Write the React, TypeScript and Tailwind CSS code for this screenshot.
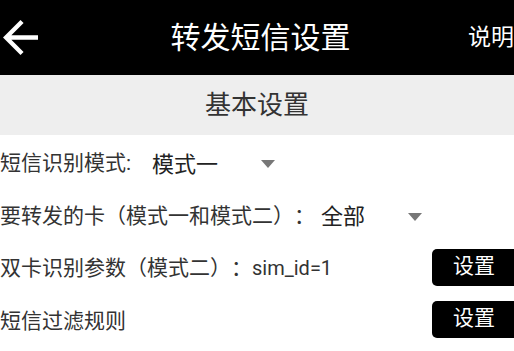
import React from "react";

const cjk = { fontFamily: "Roboto, 'Noto Sans CJK SC', sans-serif" };

function Caret() {
  return (
    <svg width="14" height="8" viewBox="0 0 14 8" className="shrink-0">
      <path d="M0 0H14L7 8Z" fill="#777777" />
    </svg>
  );
}

function SetButton() {
  return (
    <button className="ml-auto flex h-[37px] w-[82px] items-center justify-center rounded-l-[5px] bg-black pl-[2px] text-[21px] text-white">
      设置
    </button>
  );
}

export default function App() {
  return (
    <div
      className="h-[351px] w-[514px] overflow-hidden bg-white [text-spacing-trim:space-all]"
      style={cjk}
    >
      <div className="grid h-[75px] grid-cols-[53px_1fr_46px] items-center bg-black text-white">
        <div className="flex items-center pl-[3px]">
          <svg width="35" height="35" viewBox="4 4 16 16">
            <path
              d="M20 11H7.83l5.59-5.59L12 4l-8 8 8 8 1.41-1.41L7.83 13H20v-2z"
              fill="white"
            />
          </svg>
        </div>
        <div className="text-center text-[30px] leading-none">转发短信设置</div>
        <div className="text-[23px] leading-none">说明</div>
      </div>

      <div className="flex h-[60px] items-center justify-center bg-[#eeeeee] text-[26px] text-[#333333]">
        基本设置
      </div>

      <div className="flex h-[53px] items-center pt-[5px] text-[21px] text-[#333333]">
        <span>短信识别模式:</span>
        <span className="ml-[21px] text-[22px] text-[#222222]">模式一</span>
        <span className="ml-[43px]">
          <Caret />
        </span>
      </div>

      <div className="flex h-[53px] items-center pt-[4px] text-[21px] text-[#333333]">
        <span>要转发的卡（模式一和模式二）：</span>
        <span className="ml-[6px] text-[22px] text-[#222222]">全部</span>
        <span className="ml-[43px]">
          <Caret />
        </span>
      </div>

      <div className="flex h-[52px] items-center text-[21px] text-[#333333]">
        <span className="pt-[4px]">
          双卡识别参数（模式二）：<span className="text-[20px]">sim_id=1</span>
        </span>
        <SetButton />
      </div>

      <div className="flex h-[52px] items-center text-[21px] text-[#333333]">
        <span className="pt-[5px]">短信过滤规则</span>
        <SetButton />
      </div>
    </div>
  );
}
